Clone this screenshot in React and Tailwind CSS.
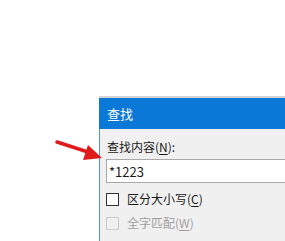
import React from "react";

const font = { fontFamily: '"Noto Sans CJK SC", "Microsoft YaHei", sans-serif' };

function Check({ label, hot, disabled, checked }) {
  const [pre, post] = label.split("|");
  return (
    <div className="flex items-center h-[24px]">
      <div
        className={`w-[13px] h-[13px] border ${
          disabled ? "border-[#cccccc] bg-[#f0f0f0]" : "border-[#333333] bg-white"
        } flex items-center justify-center`}
      >
        {checked && (
          <svg width="11" height="11" viewBox="0 0 11 11">
            <path d="M2 5.5 L4.5 8 L9 3" fill="none" stroke="#333" strokeWidth="1.4" />
          </svg>
        )}
      </div>
      <span
        className={`ml-[8px] text-[12px] leading-[16px] whitespace-nowrap ${
          disabled ? "text-[#a0a0a0]" : "text-[#1a1a1a]"
        }`}
      >
        {pre}(<span className="underline underline-offset-2">{hot}</span>){post}
      </span>
    </div>
  );
}

export default function App() {
  return (
    <div className="relative w-[285px] h-[241px] overflow-hidden bg-white" style={font}>
      <div className="ml-[99px] mt-[96px] w-[220px] border-t-2 border-[#d4d4d4]">
        {/* title bar */}
        <div className="h-[31px] bg-[#0a78d7] flex items-center pl-[8px]">
          <span className="text-white text-[13px] leading-none">查找</span>
        </div>
        {/* body */}
        <div className="bg-[#f0f0f0] border-l border-[#4f95dc] pl-[6px] pt-[10px]">
          <div className="text-[12px] leading-[16px] text-[#1a1a1a] pl-[1px] whitespace-nowrap">
            查找内容(<span className="underline underline-offset-2">N</span>):
          </div>
          <div className="mt-[4px] h-[24px] bg-white border border-[#a8a8a8] border-r-0 flex items-center pl-[2px]">
            <span className="text-[13px] text-[#1a1a1a] leading-none">*1223</span>
          </div>
          <div className="mt-[4px] flex flex-col">
            <Check label="区分大小写|" hot="C" />
            <Check label="全字匹配|" hot="W" disabled />
            <Check label="使用通配符|" hot="U" />
          </div>
        </div>
      </div>

      {/* red arrow annotation */}
      <svg className="absolute left-0 top-0" width="285" height="241" viewBox="0 0 285 241">
        <line x1="57" y1="142" x2="88" y2="152" stroke="#e01b1b" strokeWidth="3.5" strokeLinecap="round" />
        <polygon points="88,145 83,160 102,158" fill="#e01b1b" />
      </svg>
    </div>
  );
}
